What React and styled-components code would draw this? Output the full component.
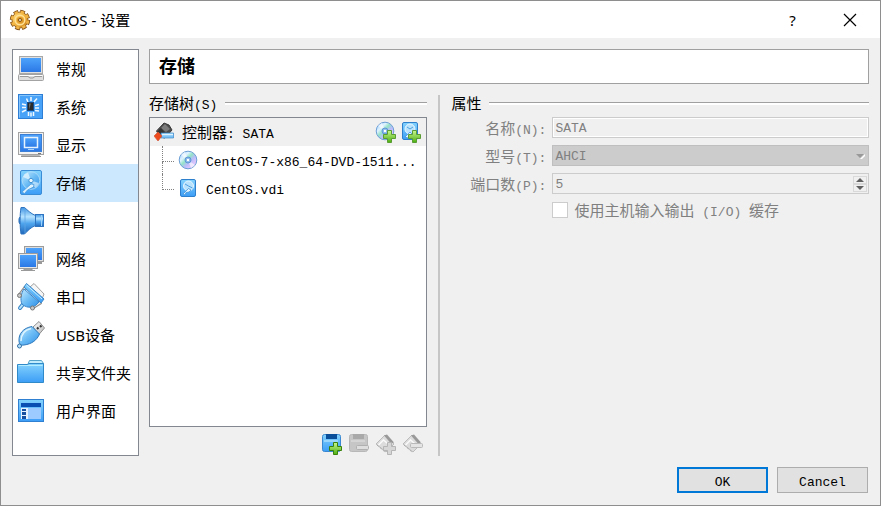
import React, { useId, useState } from "react"
import styled, { createGlobalStyle } from "styled-components"

const GlobalStyle = createGlobalStyle`
  * {
    box-sizing: border-box;
  }
  body {
    margin: 0;
    background: #f0f0f0;
    color: #000;
    font-family: "Noto Sans", "Noto Sans CJK SC", sans-serif;
    font-size: 15px;
  }
  button, input, select {
    font: inherit;
    color: inherit;
    padding: 0;
    margin: 0;
    border-radius: 0;
  }
`

const Window = styled.div`
  display: flex;
  flex-direction: column;
  min-height: 100vh;
  border: 1px solid #8e8e8e;
  background: #f0f0f0;
`

const TitleBar = styled.header`
  display: flex;
  align-items: center;
  height: 37px;
  padding: 0 2px 0 8px;
  background: #fff;
  h1 {
    flex: 1;
    margin: 0 0 0 4px;
    font-size: 15px;
    font-weight: normal;
    line-height: 18px;
  }
`

const WindowButton = styled.button`
  display: flex;
  align-items: center;
  justify-content: center;
  width: 57px;
  height: 36px;
  border: 0;
  background: none;
`

const Body = styled.div`
  flex: 1;
  display: grid;
  grid-template-columns: 127px 1fr;
  gap: 10px;
  padding: 11px 11px 0;
`

const Sidebar = styled.nav`
  border: 1px solid #828790;
  background: #fff;
`

const SidebarItem = styled.button`
  display: flex;
  align-items: center;
  gap: 11px;
  width: 100%;
  height: 38px;
  padding: 0 0 0 4px;
  border: 0;
  text-align: left;
  white-space: nowrap;
  background: ${props => (props.$active ? "#cce8ff" : "#fff")};
  span {
    padding-bottom: 2px;
  }
`

const Main = styled.main`
  display: flex;
  flex-direction: column;
  gap: 11px;
  min-width: 0;
`

const PageTitle = styled.h2`
  margin: 0;
  padding: 0 9px;
  height: 35px;
  border: 1px solid #a0a0a0;
  background: #fff;
  font-size: 18px;
  font-weight: bold;
  line-height: 33px;
`

const Panels = styled.div`
  flex: 1;
  display: flex;
  gap: 11px;
`

const Panel = styled.section`
  flex: ${props => props.$grow} 1 0;
  min-width: 0;
  display: flex;
  flex-direction: column;
  gap: 6px;
`

const Divider = styled.div`
  width: 2px;
  background: #c6c6c6;
`

const GroupTitle = styled.h3`
  display: flex;
  align-items: center;
  gap: 8px;
  height: 16px;
  margin: 0;
  font-size: 15px;
  font-weight: normal;
  line-height: 16px;
  white-space: nowrap;
  &::after {
    content: "";
    flex: 1;
    height: 2px;
    background: #fff;
    border-top: 1px solid #a0a0a0;
  }
`

const MonoText = styled.span`
  font-family: "Liberation Mono", monospace;
  font-size: 13px;
  line-height: 1;
  white-space: pre;
`

const TreeBox = styled.ul`
  flex: 1;
  margin: 0;
  padding: 0;
  border: 1px solid #828790;
  background: #fff;
  list-style: none;
  ul {
    margin: 0;
    padding: 0;
    list-style: none;
  }
`

const TreeRow = styled.div`
  display: flex;
  align-items: center;
  gap: ${props => (props.$root ? "8px" : "4px")};
  height: 28px;
  padding: 0 4px 0 ${props => (props.$root ? "4px" : "12px")};
  background: ${props => (props.$root ? "#f0f0f0" : "#fff")};
`

const TreeLabel = styled.span`
  flex: 1;
  min-width: 0;
  padding-left: ${props => (props.$root ? "0" : "4px")};
  line-height: 18px;
  white-space: nowrap;
`

const RowActions = styled.span`
  display: flex;
  gap: 3px;
`

const Branch = styled.span`
  display: flex;
  flex-direction: column;
  width: 12px;
  height: 28px;
  &::before {
    content: "";
    height: 15px;
    border-left: 1px dotted #808080;
    border-bottom: 1px dotted #808080;
  }
  &::after {
    content: "";
    flex: 1;
    border-left: ${props => (props.$last ? "0" : "1px dotted #808080")};
  }
`

const Toolbar = styled.div`
  display: flex;
  justify-content: flex-end;
  gap: 5px;
  padding: 0 3px 1px 0;
`

const ToolButton = styled.button`
  display: flex;
  width: 22px;
  height: 22px;
  border: 0;
  background: none;
`

const Form = styled.form`
  display: grid;
  grid-template-columns: 95px 1fr;
  grid-auto-rows: 21px;
  align-items: center;
  gap: 7px 6px;
  color: #808080;
`

const FieldLabel = styled.label`
  text-align: right;
  line-height: 18px;
  white-space: nowrap;
`

const Field = styled.div`
  display: flex;
  align-items: center;
  height: 21px;
  border: 1px solid ${props => (props.$filled ? "#bfbfbf" : "#cccccc")};
  background: ${props => (props.$filled ? "#cccccc" : "#f0f0f0")};
  box-shadow: ${props => (props.$inset ? "inset 0 0 0 1px #fff" : "none")};
  padding: 0 3px 0 2px;
  input, select {
    flex: 1;
    min-width: 0;
    height: 19px;
    padding-top: 2px;
    border: 0;
    background: none;
    appearance: none;
    font-family: "Liberation Mono", monospace;
    font-size: 13px;
    color: #808080;
    opacity: 1;
  }
`

const Spinner = styled.span`
  display: flex;
  flex-direction: column;
  margin-right: -2px;
  background: #fff;
  button {
    display: flex;
    align-items: center;
    justify-content: center;
    width: 14px;
    height: 8px;
    border: 1px solid #d9d9d9;
    background: #f0f0f0;
  }
`

const CheckRow = styled.label`
  grid-column: 2;
  display: flex;
  align-items: center;
  gap: 6px;
  height: 18px;
  align-self: start;
  line-height: 18px;
  white-space: nowrap;
  input {
    appearance: none;
    width: 16px;
    height: 16px;
    border: 1px solid #cccccc;
    background: #fff;
  }
`

const Footer = styled.footer`
  display: flex;
  justify-content: flex-end;
  gap: 9px;
  padding: 11px 12px 12px;
`

const DialogButton = styled.button`
  width: 91px;
  height: 26px;
  border: ${props => (props.$primary ? "2px solid #0078d7" : "1px solid #adadad")};
  background: #e1e1e1;
`

// Chinese runs keep the 15px UI face, latin runs get the narrower mono one
const Mixed = ({ children }) =>
  children.split(/([\u4e00-\u9fff]+)/).filter(Boolean).map((part, i) =>
    /[\u4e00-\u9fff]/.test(part)
      ? <span key={i}>{part}</span>
      : <MonoText key={i}>{part}</MonoText>
  )

const Drawing = styled.svg`
  flex-shrink: 0;
`

const Svg = ({ size = 28, box = size, children }) => (
  <Drawing width={size} height={size} viewBox={`0 0 ${box} ${box}`} aria-hidden="true">
    {children}
  </Drawing>
)

const HiddenDefs = styled.svg`
  position: absolute;
`

const Gradients = () => (
  <HiddenDefs width="0" height="0" aria-hidden="true">
    <defs>
      <linearGradient id="screen" x1="0" y1="0" x2="0" y2="1">
        <stop offset="0" stopColor="#4da3fb" />
        <stop offset="1" stopColor="#2b78e6" />
      </linearGradient>
      <linearGradient id="sky" x1="0" y1="0" x2="0" y2="1">
        <stop offset="0" stopColor="#84d3fd" />
        <stop offset="1" stopColor="#3c9df6" />
      </linearGradient>
      <linearGradient id="diag" x1="0" y1="0" x2="1" y2="1">
        <stop offset="0" stopColor="#c2e9ff" />
        <stop offset="0.5" stopColor="#6bbcf5" />
        <stop offset="1" stopColor="#2f8fe6" />
      </linearGradient>
      <linearGradient id="cone" x1="0" y1="0" x2="0" y2="1">
        <stop offset="0" stopColor="#3d93e2" />
        <stop offset="0.35" stopColor="#b6e3ff" />
        <stop offset="0.6" stopColor="#4fa5ee" />
        <stop offset="1" stopColor="#2068bb" />
      </linearGradient>
      <linearGradient id="metal" x1="0" y1="0" x2="1" y2="1">
        <stop offset="0" stopColor="#ffffff" />
        <stop offset="1" stopColor="#b4b4b4" />
      </linearGradient>
      <linearGradient id="green" x1="0" y1="0" x2="0" y2="1">
        <stop offset="0" stopColor="#c9f78f" />
        <stop offset="1" stopColor="#4caf10" />
      </linearGradient>
      <linearGradient id="disc" x1="0" y1="0" x2="1" y2="1">
        <stop offset="0" stopColor="#8cc6fb" />
        <stop offset="0.3" stopColor="#dff2ff" />
        <stop offset="0.45" stopColor="#93e3c6" />
        <stop offset="0.6" stopColor="#b9bcfa" />
        <stop offset="0.8" stopColor="#e3c8fb" />
        <stop offset="1" stopColor="#5ba5ee" />
      </linearGradient>
      <linearGradient id="gold" x1="0" y1="0" x2="1" y2="1">
        <stop offset="0" stopColor="#ffe08a" />
        <stop offset="0.5" stopColor="#f3b640" />
        <stop offset="1" stopColor="#bf7414" />
      </linearGradient>
    </defs>
  </HiddenDefs>
)

const GearIcon = () => (
  <Svg size={22}>
    <circle cx="11" cy="11" r="8.200" fill="none" stroke="#85531d" strokeWidth="4" strokeDasharray="4.440 2" />
    <circle cx="11" cy="11" r="8" fill="url(#gold)" stroke="#9c6520" />
    <circle cx="11" cy="11" r="8" fill="none" stroke="#f2b545" strokeWidth="2.600" strokeDasharray="3.283 3" strokeDashoffset="-.5" />
    <circle cx="11" cy="11" r="4.800" fill="none" stroke="#ffe29a" strokeWidth="1.500" />
    <circle cx="11" cy="11" r="3" fill="#dc9628" />
    <circle cx="11" cy="11" r="1.500" fill="#fff0ca" stroke="#87500c" />
  </Svg>
)

const GeneralIcon = () => (
  <Svg>
    <rect x="2.500" y="1.500" width="23" height="17" fill="#e0e0e0" stroke="#a8a8a8" />
    <rect x="4" y="3" width="20" height="14" fill="url(#screen)" />
    <rect x="1.500" y="19.500" width="25" height="6" rx="1" fill="#dedede" stroke="#a3a3a3" />
    <path d="M3 21.500h8l2 1.500h3l2-1.500h7" fill="none" stroke="#9a9a9a" />
    <path d="M2.500 20.500h23" stroke="#fff" />
  </Svg>
)

const SystemIcon = () => (
  <Svg>
    <rect x="1.500" y="1.500" width="24" height="24" fill="#48a2f8" stroke="#2f7ed6" />
    <path d="M2.500 24.500V2.500h22" fill="none" stroke="#86c5fc" />
    <g stroke="#f2faff" strokeWidth="1.500">
      <path d="M14 4v4M9.500 5.500l1.500 3.500M20 5.500L17 9M5 11l4 1M5 14.500h4M5 19l4-2M18 12.500l4-1M18 15h4M18 17.500l4 .5M11.500 19v4M14 19.500v4M16.500 19v4" />
    </g>
    <rect x="10.500" y="9.500" width="6" height="8" fill="#2b2b2b" stroke="#164a86" />
    <path d="M12 16.500v-6h2z" fill="#686868" />
  </Svg>
)

const DisplayIcon = () => (
  <Svg>
    <path d="M4 24h19l-1 2H5z" fill="#b9b9b9" />
    <rect x="1.500" y="1.500" width="25" height="22" fill="#f2f2f2" stroke="#a3a3a3" />
    <rect x="3.500" y="3.500" width="21" height="17" fill="url(#screen)" stroke="#3b7fd6" />
    <rect x="7.500" y="6.500" width="13" height="10" fill="url(#screen)" stroke="#e6f3ff" strokeWidth="1.500" />
    <path d="M11 18.500h6" stroke="#a8d3ff" />
    <path d="M21 22.500h3" stroke="#777" />
    <path d="M4 25.500h20" stroke="#959595" />
  </Svg>
)

const diskShape = (
  <>
    <rect x="3.500" y="1.500" width="21" height="24" rx="1.500" fill="url(#sky)" stroke="#3a8cd6" />
    <circle cx="14" cy="11.500" r="8.800" fill="url(#diag)" stroke="#b5def9" strokeWidth=".8" />
    <path d="M14 11.500L6 8a9 9 0 0 1 5-4.500z" fill="#e9f8ff" opacity=".7" />
    <path d="M14 11.500l8 2.500a9 9 0 0 1-4 5z" fill="#d6f0ff" opacity=".7" />
    <circle cx="14" cy="11.500" r="2.200" fill="#e9f8ff" stroke="#4092d5" />
    <path d="M5 23l9-8 3 .5-.5 2.500-6 3-3 3.500z" fill="#dff3ff" stroke="#4d9bdc" strokeWidth=".8" />
  </>
)

const StorageIcon = () => <Svg>{diskShape}</Svg>

const AudioIcon = () => (
  <Svg>
    <rect x="2" y="10" width="4" height="7" rx="2" fill="#3a8cdb" stroke="#2a6cb8" />
    <path d="M4 .5h3.500c3 2.500 6 6 11 8v10c-5 2-8 5.500-11 8.500H4C2.800 20 2.800 7 4 .5z" fill="url(#cone)" stroke="#2f74c0" />
    <path d="M8 1.500v25" stroke="#5fa5e2" strokeWidth=".8" />
    <rect x="18.500" y="7.500" width="8" height="12" fill="url(#cone)" stroke="#2f74c0" />
    <path d="M24.500 8v11" stroke="#9bd2fb" />
  </Svg>
)

const NetworkIcon = () => (
  <Svg>
    <rect x="7.500" y="1.500" width="19" height="15" fill="#ddd" stroke="#9c9c9c" />
    <rect x="9" y="3" width="16" height="12" fill="url(#screen)" />
    <path d="M20 17h5v2h-5z" fill="#999" />
    <rect x="1.500" y="8.500" width="19" height="15" fill="#e7e7e7" stroke="#9c9c9c" />
    <rect x="3" y="10" width="16" height="12" fill="url(#screen)" />
    <path d="M7 24h8v1H7zM4 25.500h14" fill="#bbb" stroke="#999" />
  </Svg>
)

const SerialIcon = () => (
  <Svg>
    <path d="M13 4l4-3.500L27 11l-2 5z" fill="#f6f6f6" stroke="#a0a0a0" />
    <path d="M7 20l-4 5" stroke="#3b87c6" strokeWidth="4" strokeLinecap="round" />
    <path d="M7 20l-4 5" stroke="#b9e4ff" strokeWidth="2" strokeLinecap="round" />
    <path d="M9 4l-6 8M24 19l-8 5" stroke="#8c8c8c" strokeWidth="4" />
    <path d="M9 4l-6 8M24 19l-8 5" stroke="#e6e6e6" strokeWidth="2" />
    <path d="M7 6l15 13-3 3C14 26 8 24 5 21 3 17 4 10 7 6z" fill="url(#diag)" stroke="#3a85c9" />
    <path d="M9.500.5L27 16l-3 4L7 4z" fill="url(#sky)" stroke="#3a85c9" />
    <path d="M9.500 2L25 16" stroke="#cdeeff" />
    <circle cx="2.500" cy="12.500" r="2" fill="#c8c8c8" stroke="#777" />
    <circle cx="15.500" cy="25" r="2" fill="#c8c8c8" stroke="#777" />
  </Svg>
)

const UsbIcon = () => (
  <Svg>
    <path d="M16 6l6-5.500 5.500 6.500-6 7z" fill="url(#metal)" stroke="#8f8f8f" />
    <path d="M20 6.500l1.500 1.500M23 4.500l1.500 1.500" stroke="#333" strokeWidth="2" />
    <path d="M15 5.500C6 7 1.500 13 2 20c.5 4 1.500 4.500 5 4 8-1 13-5 15.500-11z" fill="url(#diag)" stroke="#2e78bb" />
    <path d="M14 7.500C8 9 4 13 4 20" fill="none" stroke="#dcf4ff" strokeWidth="1.500" />
    <circle cx="2.500" cy="25" r="2" fill="#b8e2fc" stroke="#306fa5" />
  </Svg>
)

const FolderIcon = () => (
  <Svg>
    <path d="M10.500 6l2-4.500h12l2 3V8z" fill="#c0ecfb" stroke="#55a3c8" />
    <path d="M.5 5.500h10l1.500-1h14.500v19H.5z" fill="url(#sky)" stroke="#3089c8" />
    <path d="M1.500 6.500h24" stroke="#b4ecff" />
  </Svg>
)

const InterfaceIcon = () => (
  <Svg>
    <rect x="1.500" y="2.500" width="25" height="22" fill="url(#sky)" stroke="#2f7fd3" />
    <path d="M4 6h20v4H4z" fill="#0b4fb3" />
    <path d="M4 11h7v11H4z" fill="#e6f3ff" />
    <path d="M11 11h13v11H11z" fill="#9ecbff" />
    <path d="M5 12h4v2H5zM5 15h4v3H5zM5 19h4v3H5z" fill="#164f9f" />
  </Svg>
)

const ControllerIcon = () => (
  <Svg size={20}>
    <path d="M2.500 9L10 1l5 2 3 5-7 8-5-1z" fill="#4b4b4b" stroke="#3a3a3a" />
    <path d="M7 6l4-4 5 5-4 3z" fill="#7b7b7b" />
    <path d="M3 10l4 4 4-3-4-5z" fill="#333" />
    <path d="M7 11h12.500v5H7z" fill="#7cc3f8" stroke="#3c87c5" strokeWidth=".7" />
    <path d="M8 12.500h11" stroke="#dff4ff" strokeWidth="1.500" />
    <path d="M0 14l4-4 4 4-4 5z" fill="#ed4b1d" stroke="#d05a3c" strokeWidth=".7" />
  </Svg>
)

const discShape = (
  <>
    <circle cx="10" cy="10" r="8.800" fill="url(#disc)" stroke="#6c9fd6" />
    <path d="M10 10L3 5a9 9 0 0 1 4-3zM10 10l7 5a9 9 0 0 1-4 3z" fill="#fff" opacity=".6" />
    <circle cx="10" cy="10" r="3" fill="#8ab9ea" stroke="#5c96d6" />
    <circle cx="10" cy="10" r="1.200" fill="#fff" />
  </>
)

const DiscIcon = () => <Svg size={20}>{discShape}</Svg>

const DiskIcon = () => (
  <Svg size={20}>
    <rect x="2.500" y="1.500" width="15" height="17" rx="1.500" fill="url(#sky)" stroke="#2f80cc" />
    <circle cx="10.500" cy="8" r="5" fill="#b9e2fd" stroke="#e6f6ff" />
    <path d="M10.500 8l4 2M7 6l3.500 2" stroke="#4e9fe0" />
    <path d="M5 16l5.500-5.500L13 12l-2 2-3 .5L7 17z" fill="#e4f5ff" stroke="#4393d8" strokeWidth=".8" />
  </Svg>
)

const plusPath = "M12.500 9.500h4v4h4v4h-4v4h-4v-4h-4v-4h4z"

const AddDiscIcon = () => (
  <Svg size={22}>
    {discShape}
    <path d={plusPath} fill="url(#green)" stroke="#5a9c34" />
  </Svg>
)

const AddDiskIcon = () => (
  <Svg size={22}>
    <rect x="2.500" y="1.500" width="15" height="17" rx="1.500" fill="url(#sky)" stroke="#2f80cc" />
    <circle cx="10" cy="8" r="5" fill="#b9e2fd" stroke="#e6f6ff" />
    <path d="M10 8l3-2M7 6l3 2" stroke="#4e9fe0" />
    <path d="M5 16l5-5 2 2-4 4z" fill="#e4f5ff" stroke="#4393d8" strokeWidth=".8" />
    <path d={plusPath} fill="url(#green)" stroke="#5a9c34" />
  </Svg>
)

const ControllerToolIcon = ({ gray, minus }) => (
  <Svg size={22}>
    <rect x="1.500" y="1.500" width="18" height="17" rx="2" fill={gray ? "#c6c6c6" : "url(#sky)"} stroke={gray ? "#b8b8b8" : "#3a88cf"} />
    <path d="M5 1h11v5H5z" fill={gray ? "#a9a9a9" : "#0a4d98"} />
    <path d="M3 8h14" stroke={gray ? "#e3e3e3" : "#c7edff"} />
    {minus
      ? <rect x="8.500" y="12.500" width="12" height="4" rx="1" fill="#dedede" stroke="#b0b0b0" />
      : <path d={plusPath} fill="url(#green)" stroke="#39830c" />}
  </Svg>
)

const AttachmentToolIcon = ({ minus }) => (
  <Svg size={22}>
    <path d="M1 11l9-9 9 9-8 8z" fill="#dcdcdc" stroke="#bbb" />
    <path d="M9 2.500l3-1 7 8-3 1z" fill="#999" />
    <path d="M3.500 12l5-5 7 6" fill="none" stroke="#fafafa" strokeWidth="1.500" />
    <path d="M2 12l8 7" stroke="#a0a0a0" strokeDasharray="1 1" />
    {minus
      ? <rect x="8.500" y="10.500" width="12" height="4" rx="1" fill="#e4e4e4" stroke="#b9b9b9" />
      : <path d={plusPath} fill="#d6d6d6" stroke="#b5b5b5" />}
  </Svg>
)

const pages = [
  { name: "常规", Icon: GeneralIcon },
  { name: "系统", Icon: SystemIcon },
  { name: "显示", Icon: DisplayIcon },
  { name: "存储", Icon: StorageIcon },
  { name: "声音", Icon: AudioIcon },
  { name: "网络", Icon: NetworkIcon },
  { name: "串口", Icon: SerialIcon },
  { name: "USB设备", Icon: UsbIcon },
  { name: "共享文件夹", Icon: FolderIcon },
  { name: "用户界面", Icon: InterfaceIcon },
]

const media = [
  { name: "CentOS-7-x86_64-DVD-1511...", Icon: DiscIcon },
  { name: "CentOS.vdi", Icon: DiskIcon },
]

const StorageTree = () => (
  <Panel $grow={2}>
    <GroupTitle><span><Mixed>存储树(S)</Mixed></span></GroupTitle>
    <TreeBox>
      <li>
        <TreeRow $root>
          <ControllerIcon />
          <TreeLabel $root><Mixed>控制器: SATA</Mixed></TreeLabel>
          <RowActions>
            <ToolButton type="button"><AddDiscIcon /></ToolButton>
            <ToolButton type="button"><AddDiskIcon /></ToolButton>
          </RowActions>
        </TreeRow>
        <ul>
          {media.map(({ name, Icon }, i) => (
            <li key={name}>
              <TreeRow>
                <Branch $last={i === media.length - 1} />
                <Icon />
                <TreeLabel><Mixed>{name}</Mixed></TreeLabel>
              </TreeRow>
            </li>
          ))}
        </ul>
      </li>
    </TreeBox>
    <Toolbar>
      <ToolButton type="button"><ControllerToolIcon /></ToolButton>
      <ToolButton type="button" disabled><ControllerToolIcon gray minus /></ToolButton>
      <ToolButton type="button" disabled><AttachmentToolIcon /></ToolButton>
      <ToolButton type="button" disabled><AttachmentToolIcon minus /></ToolButton>
    </Toolbar>
  </Panel>
)

const Attributes = () => {
  const id = useId()
  return (
    <Panel $grow={3}>
      <GroupTitle><span>属性</span></GroupTitle>
      <Form>
        <FieldLabel htmlFor={id + "name"}><Mixed>名称(N):</Mixed></FieldLabel>
        <Field $inset>
          <input id={id + "name"} type="text" defaultValue="SATA" disabled />
        </Field>
        <FieldLabel htmlFor={id + "type"}><Mixed>型号(T):</Mixed></FieldLabel>
        <Field $filled>
          <select id={id + "type"} disabled>
            <option>AHCI</option>
          </select>
          <svg width="10" height="6" viewBox="0 0 10 6" aria-hidden="true">
            <path d="M5 6l5-5v2L7 6z" fill="#fff" />
            <path d="M1 1h8L5 5z" fill="#999" />
          </svg>
        </Field>
        <FieldLabel htmlFor={id + "ports"}><Mixed>端口数(P):</Mixed></FieldLabel>
        <Field>
          <input id={id + "ports"} type="text" inputMode="numeric" defaultValue="5" disabled />
          <Spinner>
            <button type="button" disabled>
              <svg width="8" height="4" viewBox="0 0 8 4"><path d="M0 4h8L4 0z" fill="#606060" /></svg>
            </button>
            <button type="button" disabled>
              <svg width="8" height="4" viewBox="0 0 8 4"><path d="M0 0h8L4 4z" fill="#606060" /></svg>
            </button>
          </Spinner>
        </Field>
        <CheckRow>
          <input type="checkbox" disabled />
          <span><Mixed>使用主机输入输出 (I/O) 缓存</Mixed></span>
        </CheckRow>
      </Form>
    </Panel>
  )
}

const App = () => {
  const [page, setPage] = useState("存储")
  return (
    <Window>
      <GlobalStyle />
      <Gradients />
      <TitleBar>
        <GearIcon />
        <h1>CentOS - 设置</h1>
        <WindowButton type="button">?</WindowButton>
        <WindowButton type="button">
          <svg width="14" height="14" viewBox="0 0 14 14" aria-hidden="true">
            <path d="M1 1l12 12M13 1L1 13" stroke="#000" strokeWidth="1.200" />
          </svg>
        </WindowButton>
      </TitleBar>
      <Body>
        <Sidebar>
          {pages.map(({ name, Icon }) => (
            <SidebarItem key={name} type="button" $active={name === page} onClick={() => setPage(name)}>
              <Icon />
              <span>{name}</span>
            </SidebarItem>
          ))}
        </Sidebar>
        <Main>
          <PageTitle>{page}</PageTitle>
          <Panels>
            <StorageTree />
            <Divider />
            <Attributes />
          </Panels>
        </Main>
      </Body>
      <Footer>
        <DialogButton type="button" $primary><MonoText>OK</MonoText></DialogButton>
        <DialogButton type="button"><MonoText>Cancel</MonoText></DialogButton>
      </Footer>
    </Window>
  )
}

export default App
